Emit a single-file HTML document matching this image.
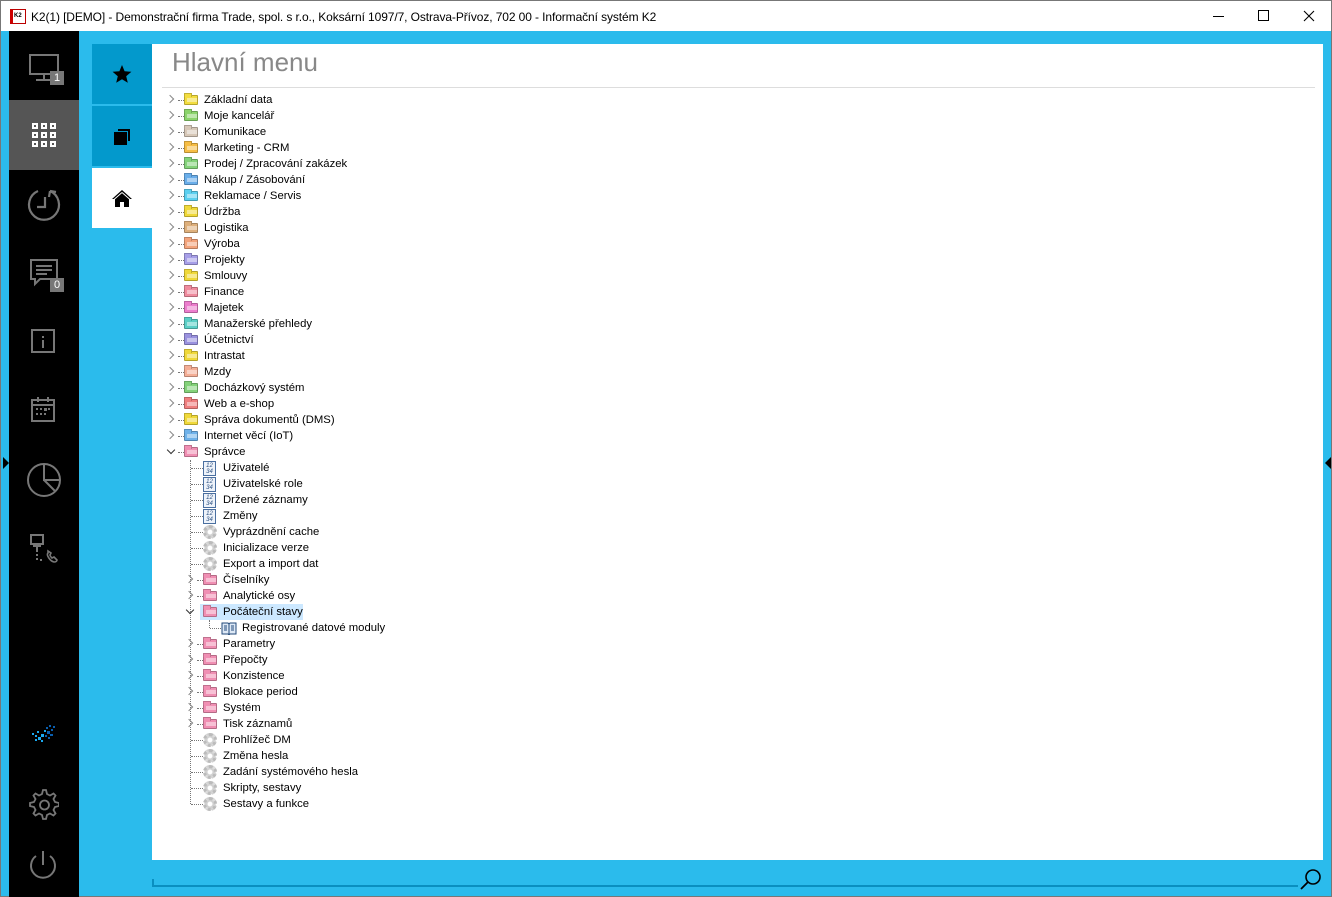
<!DOCTYPE html>
<html><head><meta charset="utf-8"><style>
*{margin:0;padding:0;box-sizing:border-box}
html,body{width:1332px;height:897px;overflow:hidden}
body{background:#2bbbec;font-family:"Liberation Sans",sans-serif;position:relative}
.abs{position:absolute}
#title{left:0;top:0;width:1332px;height:31px;background:#fff;border:1px solid #777;border-bottom:none}
#title .t{position:absolute;left:30px;top:9px;font-size:12px;color:#000;letter-spacing:-0.1px}
#frame{left:0;top:31px;width:1332px;height:866px;border-left:1px solid #777;border-right:1px solid #777;border-bottom:1px solid #777}
#side{left:9px;top:31px;width:70px;height:866px;background:#000;overflow:hidden}
.tab{position:absolute;left:92px;width:60px;height:60px;background:#0399cc}
#panel{left:152px;top:44px;width:1171px;height:816px;background:#fff}
h1{position:absolute;left:172px;top:47px;font-size:26px;font-weight:normal;color:#888}
#hr{left:162px;top:87px;width:1153px;height:1px;background:#ddd}
#tree{left:162px;top:92px;width:400px}
.r{position:relative;height:16px;font-size:11.3px;color:#000;line-height:16px}
.r .tx{position:absolute;top:0;white-space:nowrap}
.ch{position:absolute;top:4px;width:6px;height:6px;border-right:1.5px solid #888;border-top:1.5px solid #888;transform:rotate(45deg)}
.cd{position:absolute;top:3px;width:6px;height:6px;border-right:1.5px solid #333;border-bottom:1.5px solid #333;transform:rotate(45deg)}
.dh{position:absolute;top:8px;height:1px;border-top:1px dotted #777}
.fo{position:absolute;top:3px;width:14px;height:10px;border:1px solid rgba(0,0,0,.25);border-radius:1px}
.fo:before{content:"";position:absolute;left:-1px;top:-3px;width:6px;height:3px;background:inherit;border:1px solid rgba(0,0,0,.2);border-bottom:none}
.fo:after{content:"";position:absolute;left:2px;top:2px;width:10px;height:4px;background:rgba(255,255,255,.45)}
.nm{position:absolute;top:1px;width:13px;height:15px;background:#eef3fa;border:1px solid #4a6fa0;font-size:6px;line-height:6px;color:#2a4f80;text-align:center;padding-top:1px}
.gr{position:absolute;top:1px;width:14px;height:14px;border-radius:50%;border:3px dotted #bbb;background:radial-gradient(circle,#fff 2px,#ccc 3px,#ddd 5px)}
.vl{position:absolute;width:1px;border-left:1px dotted #777}
.ic{position:absolute}
</style></head><body>
<div id="frame" class="abs"></div>
<div id="title" class="abs">
 <div class="abs" style="left:9px;top:8px;width:16px;height:15px;background:#fff;border:1px solid #b00;border-left:3px solid #c00"><div style="font-size:6px;font-weight:bold;margin:3px 0 0 1px">K2</div></div>
 <div class="t">K2(1) [DEMO] - Demonstrační firma Trade, spol. s r.o., Koksární 1097/7, Ostrava-Přívoz, 702 00 - Informační systém K2</div>
 <div class="abs" style="left:1212px;top:15px;width:11px;height:1px;background:#000"></div>
 <div class="abs" style="left:1257px;top:9px;width:11px;height:11px;border:1px solid #000"></div>
 <svg class="abs" style="left:1302px;top:9px" width="12" height="12"><path d="M1 1L11 11M11 1L1 11" stroke="#000" stroke-width="1.1"/></svg>
</div>
<div id="side" class="abs">
 <div class="abs" style="left:0;top:69px;width:70px;height:70px;background:#555"></div>
 <svg class="abs" style="left:19px;top:22px" width="36" height="34"><rect x="2" y="2" width="28" height="19" fill="none" stroke="#777" stroke-width="2"/><path d="M16 21v5M8 27h16" stroke="#777" stroke-width="2"/></svg>
 <div class="abs" style="left:41px;top:40px;width:14px;height:14px;background:#777;color:#fff;font-size:11px;text-align:center;line-height:14px">1</div>
 <svg class="abs" style="left:23px;top:92px" width="25" height="25"><g fill="#fff"><rect x="0" y="0" width="6" height="6"/><rect x="9" y="0" width="6" height="6"/><rect x="18" y="0" width="6" height="6"/><rect x="0" y="9" width="6" height="6"/><rect x="9" y="9" width="6" height="6"/><rect x="18" y="9" width="6" height="6"/><rect x="0" y="18" width="6" height="6"/><rect x="9" y="18" width="6" height="6"/><rect x="18" y="18" width="6" height="6"/></g><g fill="#555"><rect x="2" y="2" width="2" height="2"/><rect x="11" y="2" width="2" height="2"/><rect x="20" y="2" width="2" height="2"/><rect x="2" y="11" width="2" height="2"/><rect x="11" y="11" width="2" height="2"/><rect x="20" y="11" width="2" height="2"/><rect x="2" y="20" width="2" height="2"/><rect x="11" y="20" width="2" height="2"/><rect x="20" y="20" width="2" height="2"/></g></svg>
 <svg class="abs" style="left:17px;top:156px" width="36" height="36"><path d="M24 4A15 15 0 1 1 12 4" fill="none" stroke="#777" stroke-width="2.2"/><path d="M19 10v10h-8M24 4l-1 6M24 4l6 1" fill="none" stroke="#777" stroke-width="2.2"/></svg>
 <svg class="abs" style="left:20px;top:227px" width="30" height="30"><path d="M2 2h26v19H11l-5 5v-5H2z" fill="none" stroke="#777" stroke-width="2"/><path d="M7 8h16M7 12h16M7 16h11" stroke="#777" stroke-width="2"/></svg>
 <div class="abs" style="left:41px;top:247px;width:14px;height:14px;background:#777;color:#fff;font-size:11px;text-align:center;line-height:14px">0</div>
 <svg class="abs" style="left:22px;top:298px" width="26" height="26"><rect x="1" y="1" width="22" height="22" fill="none" stroke="#777" stroke-width="2"/><path d="M12 7v2M12 11v8" stroke="#777" stroke-width="2"/></svg>
 <svg class="abs" style="left:22px;top:366px" width="26" height="26"><rect x="1" y="3" width="22" height="21" fill="none" stroke="#777" stroke-width="2"/><path d="M1 8h22M7 0v5M17 0v5" stroke="#777" stroke-width="2"/><g fill="#777"><rect x="5" y="11" width="2" height="2"/><rect x="9" y="11" width="2" height="2"/><rect x="13" y="11" width="3" height="3"/><rect x="17" y="11" width="2" height="2"/><rect x="5" y="16" width="2" height="2"/><rect x="9" y="16" width="2" height="2"/><rect x="13" y="16" width="2" height="2"/></g></svg>
 <svg class="abs" style="left:17px;top:431px" width="36" height="36"><circle cx="18" cy="18" r="16" fill="none" stroke="#777" stroke-width="2"/><path d="M18 2v16h16M18 18l11 11" fill="none" stroke="#777" stroke-width="2"/></svg>
 <svg class="abs" style="left:19px;top:502px" width="34" height="34"><rect x="3" y="2" width="12" height="9" fill="none" stroke="#777" stroke-width="2"/><path d="M5 13h8M9 13v6M9 21v2M9 25v2M12 27h2" stroke="#777" stroke-width="2"/><path d="M20 20c-2 2 2 8 6 9 2 0 3-1 3-2l-3-3-2 1c-1-1-2-2-2-3l1-2-3-2z" fill="none" stroke="#777" stroke-width="1.6"/></svg>
 <svg class="abs" style="left:23px;top:694px" width="26" height="24"><g fill="#1aa9f0"><rect x="0" y="8" width="2" height="2"/><rect x="3" y="10" width="2" height="2"/><rect x="5" y="6" width="2" height="2"/><rect x="6" y="12" width="3" height="3"/><rect x="9" y="9" width="3" height="3"/><rect x="3" y="14" width="2" height="2"/><rect x="9" y="15" width="2" height="2"/><rect x="12" y="5" width="2" height="2"/></g><g fill="#0a5fb0"><rect x="14" y="2" width="2" height="2"/><rect x="17" y="0" width="2" height="2"/><rect x="15" y="6" width="3" height="3"/><rect x="19" y="4" width="2" height="2"/><rect x="13" y="10" width="2" height="2"/><rect x="18" y="9" width="3" height="2"/><rect x="16" y="12" width="2" height="2"/><rect x="21" y="1" width="2" height="2"/></g></svg>
 <svg class="abs" style="left:18px;top:757px" width="32" height="32"><path d="M16 2l3 0 1 4 3 1.5 3.5-2 2 2-2 3.5 1.5 3 4 1v3l-4 1-1.5 3 2 3.5-2 2-3.5-2-3 1.5-1 4h-3l-1-4-3-1.5-3.5 2-2-2 2-3.5-1.5-3-4-1v-3l4-1 1.5-3-2-3.5 2-2 3.5 2 3-1.5 1-4z" fill="none" stroke="#777" stroke-width="1.8"/><circle cx="17.5" cy="17" r="4.5" fill="none" stroke="#777" stroke-width="1.8"/></svg>
 <svg class="abs" style="left:18px;top:818px" width="32" height="32"><path d="M9 7A12 12 0 1 0 23 7" fill="none" stroke="#777" stroke-width="2"/><path d="M16 2v14" stroke="#777" stroke-width="2"/></svg>
</div>
<svg class="abs" style="left:3px;top:457px" width="6" height="12"><path d="M0 0l6 6-6 6z" fill="#000"/></svg>
<svg class="abs" style="left:1325px;top:457px" width="6" height="12"><path d="M6 0L0 6l6 6z" fill="#000"/></svg>

<div class="tab" style="top:44px"><svg class="abs" style="left:20px;top:20px" width="20" height="20"><path d="M10 1l2.6 6.3 6.8.5-5.2 4.4 1.6 6.6L10 15.3 4.2 18.8l1.6-6.6L.6 7.8l6.8-.5z" fill="#000"/></svg></div>
<div class="tab" style="top:106px"><svg class="abs" style="left:21px;top:21px" width="20" height="20"><path d="M5 2h12v12h-2V4H5z" fill="#000"/><rect x="1" y="5" width="13" height="13" fill="#000"/></svg></div>
<div class="tab" style="top:168px;background:#fff"><svg class="abs" style="left:20px;top:21px" width="20" height="18"><path d="M10 1L0 10h3v8h5v-5h4v5h5v-8h3z" fill="#000"/><path d="M10 3.5L2 10.5M10 3.5l8 7" stroke="#fff" stroke-width="1"/></svg></div>

<div id="panel" class="abs"></div>
<h1>Hlavní menu</h1>
<div id="hr" class="abs"></div>
<div class="abs" style="left:152px;top:885px;width:1146px;height:2px;background:#0a8fc0"></div>
<div class="abs" style="left:152px;top:879px;width:2px;height:8px;background:#0a8fc0"></div>
<svg class="abs" style="left:1299px;top:868px" width="24" height="22"><circle cx="14" cy="9" r="7" fill="none" stroke="#000" stroke-width="1.6"/><path d="M9 14l-7 7" stroke="#000" stroke-width="1.8"/></svg>

<div id="tree" class="abs">
<div class="vl" style="left:28px;top:368px;height:344px"></div>
<div class="vl" style="left:47px;top:528px;height:8px"></div>
<div class="r"><i class="ch" style="left:5px"></i><i class="dh" style="left:16px;width:6px"></i><i class="fo" style="left:22px;background:#f3dd3f"></i><span class="tx" style="left:42px">Základní data</span></div>
<div class="r"><i class="ch" style="left:5px"></i><i class="dh" style="left:16px;width:6px"></i><i class="fo" style="left:22px;background:#8bd46b"></i><span class="tx" style="left:42px">Moje kancelář</span></div>
<div class="r"><i class="ch" style="left:5px"></i><i class="dh" style="left:16px;width:6px"></i><i class="fo" style="left:22px;background:#d7c8b8"></i><span class="tx" style="left:42px">Komunikace</span></div>
<div class="r"><i class="ch" style="left:5px"></i><i class="dh" style="left:16px;width:6px"></i><i class="fo" style="left:22px;background:#f6bd45"></i><span class="tx" style="left:42px">Marketing - CRM</span></div>
<div class="r"><i class="ch" style="left:5px"></i><i class="dh" style="left:16px;width:6px"></i><i class="fo" style="left:22px;background:#84d27a"></i><span class="tx" style="left:42px">Prodej / Zpracování zakázek</span></div>
<div class="r"><i class="ch" style="left:5px"></i><i class="dh" style="left:16px;width:6px"></i><i class="fo" style="left:22px;background:#6aaeea"></i><span class="tx" style="left:42px">Nákup / Zásobování</span></div>
<div class="r"><i class="ch" style="left:5px"></i><i class="dh" style="left:16px;width:6px"></i><i class="fo" style="left:22px;background:#5cd0f0"></i><span class="tx" style="left:42px">Reklamace / Servis</span></div>
<div class="r"><i class="ch" style="left:5px"></i><i class="dh" style="left:16px;width:6px"></i><i class="fo" style="left:22px;background:#f0d93a"></i><span class="tx" style="left:42px">Údržba</span></div>
<div class="r"><i class="ch" style="left:5px"></i><i class="dh" style="left:16px;width:6px"></i><i class="fo" style="left:22px;background:#deb07c"></i><span class="tx" style="left:42px">Logistika</span></div>
<div class="r"><i class="ch" style="left:5px"></i><i class="dh" style="left:16px;width:6px"></i><i class="fo" style="left:22px;background:#f3a47c"></i><span class="tx" style="left:42px">Výroba</span></div>
<div class="r"><i class="ch" style="left:5px"></i><i class="dh" style="left:16px;width:6px"></i><i class="fo" style="left:22px;background:#a79fe8"></i><span class="tx" style="left:42px">Projekty</span></div>
<div class="r"><i class="ch" style="left:5px"></i><i class="dh" style="left:16px;width:6px"></i><i class="fo" style="left:22px;background:#f0d93a"></i><span class="tx" style="left:42px">Smlouvy</span></div>
<div class="r"><i class="ch" style="left:5px"></i><i class="dh" style="left:16px;width:6px"></i><i class="fo" style="left:22px;background:#ef8b9e"></i><span class="tx" style="left:42px">Finance</span></div>
<div class="r"><i class="ch" style="left:5px"></i><i class="dh" style="left:16px;width:6px"></i><i class="fo" style="left:22px;background:#ec7ecd"></i><span class="tx" style="left:42px">Majetek</span></div>
<div class="r"><i class="ch" style="left:5px"></i><i class="dh" style="left:16px;width:6px"></i><i class="fo" style="left:22px;background:#5ccfc6"></i><span class="tx" style="left:42px">Manažerské přehledy</span></div>
<div class="r"><i class="ch" style="left:5px"></i><i class="dh" style="left:16px;width:6px"></i><i class="fo" style="left:22px;background:#9a92df"></i><span class="tx" style="left:42px">Účetnictví</span></div>
<div class="r"><i class="ch" style="left:5px"></i><i class="dh" style="left:16px;width:6px"></i><i class="fo" style="left:22px;background:#f0d93a"></i><span class="tx" style="left:42px">Intrastat</span></div>
<div class="r"><i class="ch" style="left:5px"></i><i class="dh" style="left:16px;width:6px"></i><i class="fo" style="left:22px;background:#f4ae96"></i><span class="tx" style="left:42px">Mzdy</span></div>
<div class="r"><i class="ch" style="left:5px"></i><i class="dh" style="left:16px;width:6px"></i><i class="fo" style="left:22px;background:#84d27a"></i><span class="tx" style="left:42px">Docházkový systém</span></div>
<div class="r"><i class="ch" style="left:5px"></i><i class="dh" style="left:16px;width:6px"></i><i class="fo" style="left:22px;background:#ef7f7f"></i><span class="tx" style="left:42px">Web a e-shop</span></div>
<div class="r"><i class="ch" style="left:5px"></i><i class="dh" style="left:16px;width:6px"></i><i class="fo" style="left:22px;background:#f0d93a"></i><span class="tx" style="left:42px">Správa dokumentů (DMS)</span></div>
<div class="r"><i class="ch" style="left:5px"></i><i class="dh" style="left:16px;width:6px"></i><i class="fo" style="left:22px;background:#6fb2ea"></i><span class="tx" style="left:42px">Internet věcí (IoT)</span></div>
<div class="r"><i class="cd" style="left:6px"></i><i class="dh" style="left:16px;width:6px"></i><i class="fo" style="left:22px;background:#f08fb3"></i><span class="tx" style="left:42px">Správce</span></div>
<div class="r"><i class="dh" style="left:29px;width:12px"></i><i class="nm" style="left:41px">12<br>34</i><span class="tx" style="left:61px">Uživatelé</span></div>
<div class="r"><i class="dh" style="left:29px;width:12px"></i><i class="nm" style="left:41px">12<br>34</i><span class="tx" style="left:61px">Uživatelské role</span></div>
<div class="r"><i class="dh" style="left:29px;width:12px"></i><i class="nm" style="left:41px">12<br>34</i><span class="tx" style="left:61px">Držené záznamy</span></div>
<div class="r"><i class="dh" style="left:29px;width:12px"></i><i class="nm" style="left:41px">12<br>34</i><span class="tx" style="left:61px">Změny</span></div>
<div class="r"><i class="dh" style="left:29px;width:12px"></i><i class="gr" style="left:41px"></i><span class="tx" style="left:61px">Vyprázdnění cache</span></div>
<div class="r"><i class="dh" style="left:29px;width:12px"></i><i class="gr" style="left:41px"></i><span class="tx" style="left:61px">Inicializace verze</span></div>
<div class="r"><i class="dh" style="left:29px;width:12px"></i><i class="gr" style="left:41px"></i><span class="tx" style="left:61px">Export a import dat</span></div>
<div class="r"><i class="ch" style="left:24px"></i><i class="dh" style="left:35px;width:6px"></i><i class="fo" style="left:41px;background:#f08fb3"></i><span class="tx" style="left:61px">Číselníky</span></div>
<div class="r"><i class="ch" style="left:24px"></i><i class="dh" style="left:35px;width:6px"></i><i class="fo" style="left:41px;background:#f08fb3"></i><span class="tx" style="left:61px">Analytické osy</span></div>
<div class="r"><div class="abs" style="left:38px;top:0;width:103px;height:16px;background:#cce8ff"></div><i class="cd" style="left:25px"></i><i class="fo" style="left:41px;background:#f08fb3"></i><span class="tx" style="left:61px">Počáteční stavy</span></div>
<div class="r"><i class="dh" style="left:48px;width:11px"></i><svg class="ic" style="left:59px;top:2px" width="16" height="13"><path d="M1 1h6l1 1 1-1h6v11H9l-1 1-1-1H1z" fill="#dde8f5" stroke="#234a7a"/><path d="M8 2v10M3 4h3M3 6h3M3 8h3M10 4h3M10 6h3M10 8h3" stroke="#234a7a" stroke-width="1"/></svg><span class="tx" style="left:80px">Registrované datové moduly</span></div>
<div class="r"><i class="ch" style="left:24px"></i><i class="dh" style="left:35px;width:6px"></i><i class="fo" style="left:41px;background:#f08fb3"></i><span class="tx" style="left:61px">Parametry</span></div>
<div class="r"><i class="ch" style="left:24px"></i><i class="dh" style="left:35px;width:6px"></i><i class="fo" style="left:41px;background:#f08fb3"></i><span class="tx" style="left:61px">Přepočty</span></div>
<div class="r"><i class="ch" style="left:24px"></i><i class="dh" style="left:35px;width:6px"></i><i class="fo" style="left:41px;background:#f08fb3"></i><span class="tx" style="left:61px">Konzistence</span></div>
<div class="r"><i class="ch" style="left:24px"></i><i class="dh" style="left:35px;width:6px"></i><i class="fo" style="left:41px;background:#f08fb3"></i><span class="tx" style="left:61px">Blokace period</span></div>
<div class="r"><i class="ch" style="left:24px"></i><i class="dh" style="left:35px;width:6px"></i><i class="fo" style="left:41px;background:#f08fb3"></i><span class="tx" style="left:61px">Systém</span></div>
<div class="r"><i class="ch" style="left:24px"></i><i class="dh" style="left:35px;width:6px"></i><i class="fo" style="left:41px;background:#f08fb3"></i><span class="tx" style="left:61px">Tisk záznamů</span></div>
<div class="r"><i class="dh" style="left:29px;width:12px"></i><i class="gr" style="left:41px"></i><span class="tx" style="left:61px">Prohlížeč DM</span></div>
<div class="r"><i class="dh" style="left:29px;width:12px"></i><i class="gr" style="left:41px"></i><span class="tx" style="left:61px">Změna hesla</span></div>
<div class="r"><i class="dh" style="left:29px;width:12px"></i><i class="gr" style="left:41px"></i><span class="tx" style="left:61px">Zadání systémového hesla</span></div>
<div class="r"><i class="dh" style="left:29px;width:12px"></i><i class="gr" style="left:41px"></i><span class="tx" style="left:61px">Skripty, sestavy</span></div>
<div class="r"><i class="dh" style="left:29px;width:12px"></i><i class="gr" style="left:41px"></i><span class="tx" style="left:61px">Sestavy a funkce</span></div>
</div>
</body></html>
